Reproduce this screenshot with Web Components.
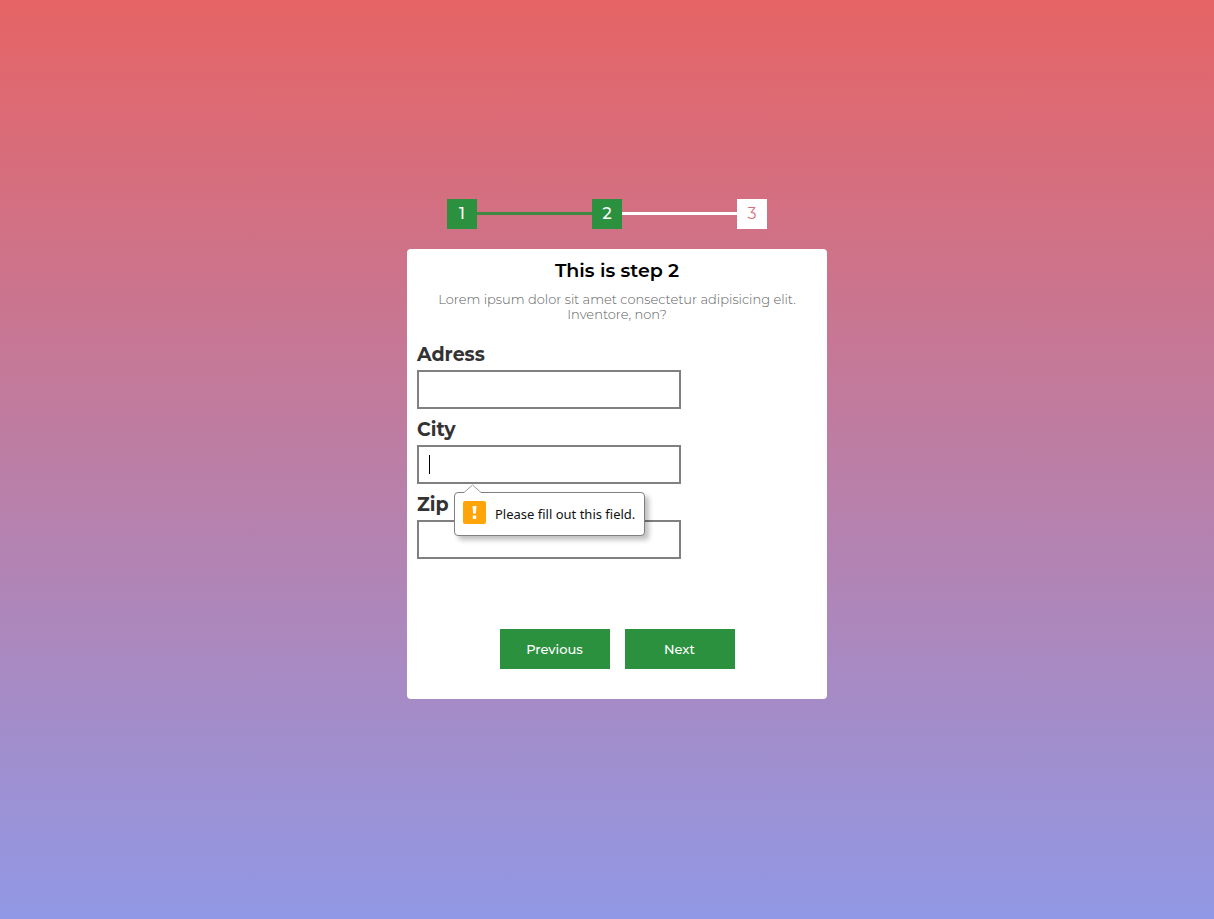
<!DOCTYPE html>
<html lang="en">
<head>
<meta charset="utf-8">
<meta name="viewport" content="width=device-width, initial-scale=1">
<title>Multi-step form</title>
<style>
  html { height: 100%; }
  body {
    margin: 0;
    min-height: 100%;
    display: grid;
    place-items: center;
    background: linear-gradient(#e66465, #9198e5);
    font-family: Montserrat, Inter, sans-serif;
    --green: #2c913f;
  }
</style>
</head>
<body>
<form-wizard></form-wizard>

<template id="wizard">
  <style>
    :host { display: block; width: 400px; }
    /* the card is wider than the stepper's column by its own padding */
    form-card { width: 100%; margin: 20px 0 22px; }
    form { display: flex; flex-direction: column; gap: 8px; }
    nav { display: flex; justify-content: center; gap: 15px; margin-top: 62px; }
  </style>
  <step-bar>
    <step-box done>1</step-box>
    <step-line done></step-line>
    <step-box done>2</step-box>
    <step-line></step-line>
    <step-box>3</step-box>
  </step-bar>
  <form-card>
    <span slot="title">This is step 2</span>
    <span slot="text">Lorem ipsum dolor sit amet consectetur adipisicing elit. Inventore, non?</span>
    <form novalidate>
      <text-field label="Adress"></text-field>
      <text-field label="City" active>
        <field-hint>Please fill out this field.</field-hint>
      </text-field>
      <text-field label="Zip"></text-field>
      <nav>
        <form-button>Previous</form-button>
        <form-button>Next</form-button>
      </nav>
    </form>
  </form-card>
</template>

<template id="bar">
  <style>
    :host { display: flex; align-items: center; margin: 0 40px; }
  </style>
  <slot></slot>
</template>

<template id="box">
  <style>
    :host {
      display: grid; place-items: center; width: 30px; height: 30px;
      background: #fff; color: #d9707c; font-size: 16px; font-weight: 400; line-height: 20px;
    }
    :host([done]) { background: var(--green); color: #fff; font-weight: 500; }
  </style>
  <slot></slot>
</template>

<template id="line">
  <style>
    :host { display: block; flex: 1; height: 3px; background: #fff; }
    :host([done]) { background: #408842; }
  </style>
</template>

<template id="card">
  <style>
    :host {
      display: block; box-sizing: content-box; padding: 10px 10px 30px;
      background: #fff; border-radius: 4px;
    }
    h1 {
      margin: 0 0 9px; text-align: center; color: #000;
      font-size: 19px; font-weight: 600; line-height: 24px;
    }
    p {
      margin: 0 0 20px; padding: 0 15px; text-align: center; color: #606060;
      font-size: 13px; font-weight: 300; line-height: 15px;
    }
  </style>
  <h1><slot name="title"></slot></h1>
  <p><slot name="text"></slot></p>
  <slot></slot>
</template>

<template id="field">
  <style>
    :host { display: block; position: relative; }
    label {
      display: block; margin-bottom: 2px; color: #333;
      font-size: 19px; font-weight: 700; line-height: 26px;
    }
    input {
      display: block; box-sizing: border-box; width: 66%; height: 39px;
      padding: 0 10px; border: 2px solid #808080; border-radius: 0;
      background: #fff; font: inherit; font-size: 16px; outline: none;
    }
    .caret { display: none; }
    :host([active]) .caret {
      display: block; position: absolute; left: 12px; bottom: 10px;
      width: 1px; height: 19px; background: #000;
    }
    ::slotted(field-hint) { position: absolute; z-index: 1; left: 37px; top: 100%; }
  </style>
  <label for="value"></label>
  <input id="value" type="text" required>
  <span class="caret"></span>
  <slot></slot>
</template>

<template id="hint">
  <style>
    :host {
      display: flex; align-items: center; gap: 9px; box-sizing: border-box;
      height: 44px; margin-top: 8px; padding: 0 9px 0 8px; white-space: nowrap;
      background: #fff; border: 1px solid #808080; border-radius: 4px;
      box-shadow: 4px 4px 5px rgba(0, 0, 0, .25);
      color: #111; font-family: "Segoe UI", "Noto Sans", sans-serif; font-size: 13px; line-height: 18px;
    }
    .tip { position: absolute; left: 8px; top: -9px; }
    .mark { display: block; margin-bottom: 3px; }
  </style>
  <svg class="tip" width="19" height="10" viewBox="0 0 19 10" aria-hidden="true">
    <path d="M1 10V8.5L9.5 1L18 8.5V10Z" fill="#fff"/>
    <path d="M1 8.5L9.5 1L18 8.5" fill="none" stroke="#a0a0a0"/>
  </svg>
  <svg class="mark" width="23" height="23" viewBox="0 0 23 23" aria-hidden="true">
    <rect width="23" height="23" rx="2" fill="#ffa409"/>
    <path d="M9.500 5h4l-.6 7.500h-2.800zM9.800 14.500h3.400V18H9.800z" fill="#fff"/>
  </svg>
  <slot></slot>
</template>

<template id="button">
  <style>
    :host { display: block; width: 110px; }
    button {
      display: block; width: 100%; height: 40px; padding: 0; border: 0;
      background: var(--green); color: #fff; font: inherit;
      font-size: 13px; font-weight: 500; cursor: pointer;
    }
  </style>
  <button type="button"><slot></slot></button>
</template>

<script>
  class Base extends HTMLElement {
    constructor() {
      super();
      const template = document.getElementById(this.constructor.template);
      this.attachShadow({ mode: "open" }).append(template.content.cloneNode(true));
    }
  }
  const define = (name, template) =>
    customElements.define(name, class extends Base { static template = template; });

  customElements.define("text-field", class extends Base {
    static template = "field";
    connectedCallback() {
      this.shadowRoot.querySelector("label").textContent = this.getAttribute("label");
    }
  });
  define("step-bar", "bar");
  define("step-box", "box");
  define("step-line", "line");
  define("form-card", "card");
  define("field-hint", "hint");
  define("form-button", "button");
  define("form-wizard", "wizard");
</script>
</body>
</html>
